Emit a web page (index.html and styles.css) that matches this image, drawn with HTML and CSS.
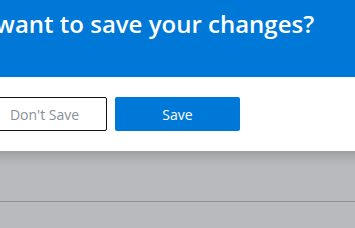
FILE: index.html
```html
<!DOCTYPE html>
<html lang="en">
<head>
  <meta charset="UTF-8">
  <title>Save changes</title>
  <link rel="stylesheet" href="styles.css">
</head>
<body>
<div class="page">
  <div class="toolbar"></div>
  <div class="content"></div>
</div>

<!-- modal over the page -->
<div class="dialog">
  <div class="dialog-head">
    <h1>Do you want to save your changes?</h1>
  </div>
  <div class="dialog-foot">
    <button class="btn btn-plain">Don't Save</button>
    <button class="btn btn-primary">Save</button>
  </div>
</div>
</body>
</html>
```

FILE: styles.css
```css
body{margin:0;font-family:"Open Sans","Noto Sans",Arial,sans-serif;background:#b9babd;overflow:hidden}
.page{height:228px}
.toolbar{height:201px;border-bottom:1px solid #8c9595}
.dialog{position:absolute;top:0;left:-149px;width:520px;background:#fff;box-shadow:0 3px 12px rgba(0,0,0,.22)}
.dialog-head{background:#0078d7;height:77px;padding-top:8px;box-sizing:border-box}
.dialog-head h1{margin:0;font-size:24px;line-height:32px;font-weight:600;color:#fff;text-align:center;white-space:nowrap}
.dialog-foot{display:flex;justify-content:center;gap:8px;padding:20px 0}
.btn{width:125px;height:34px;border-radius:2px;font-family:inherit;font-size:14px;cursor:pointer;padding:0}
.btn-plain{background:#fff;border:1px solid #111;color:#87909a}
.btn-primary{background:#0078d7;border:none;color:#fff}
```
